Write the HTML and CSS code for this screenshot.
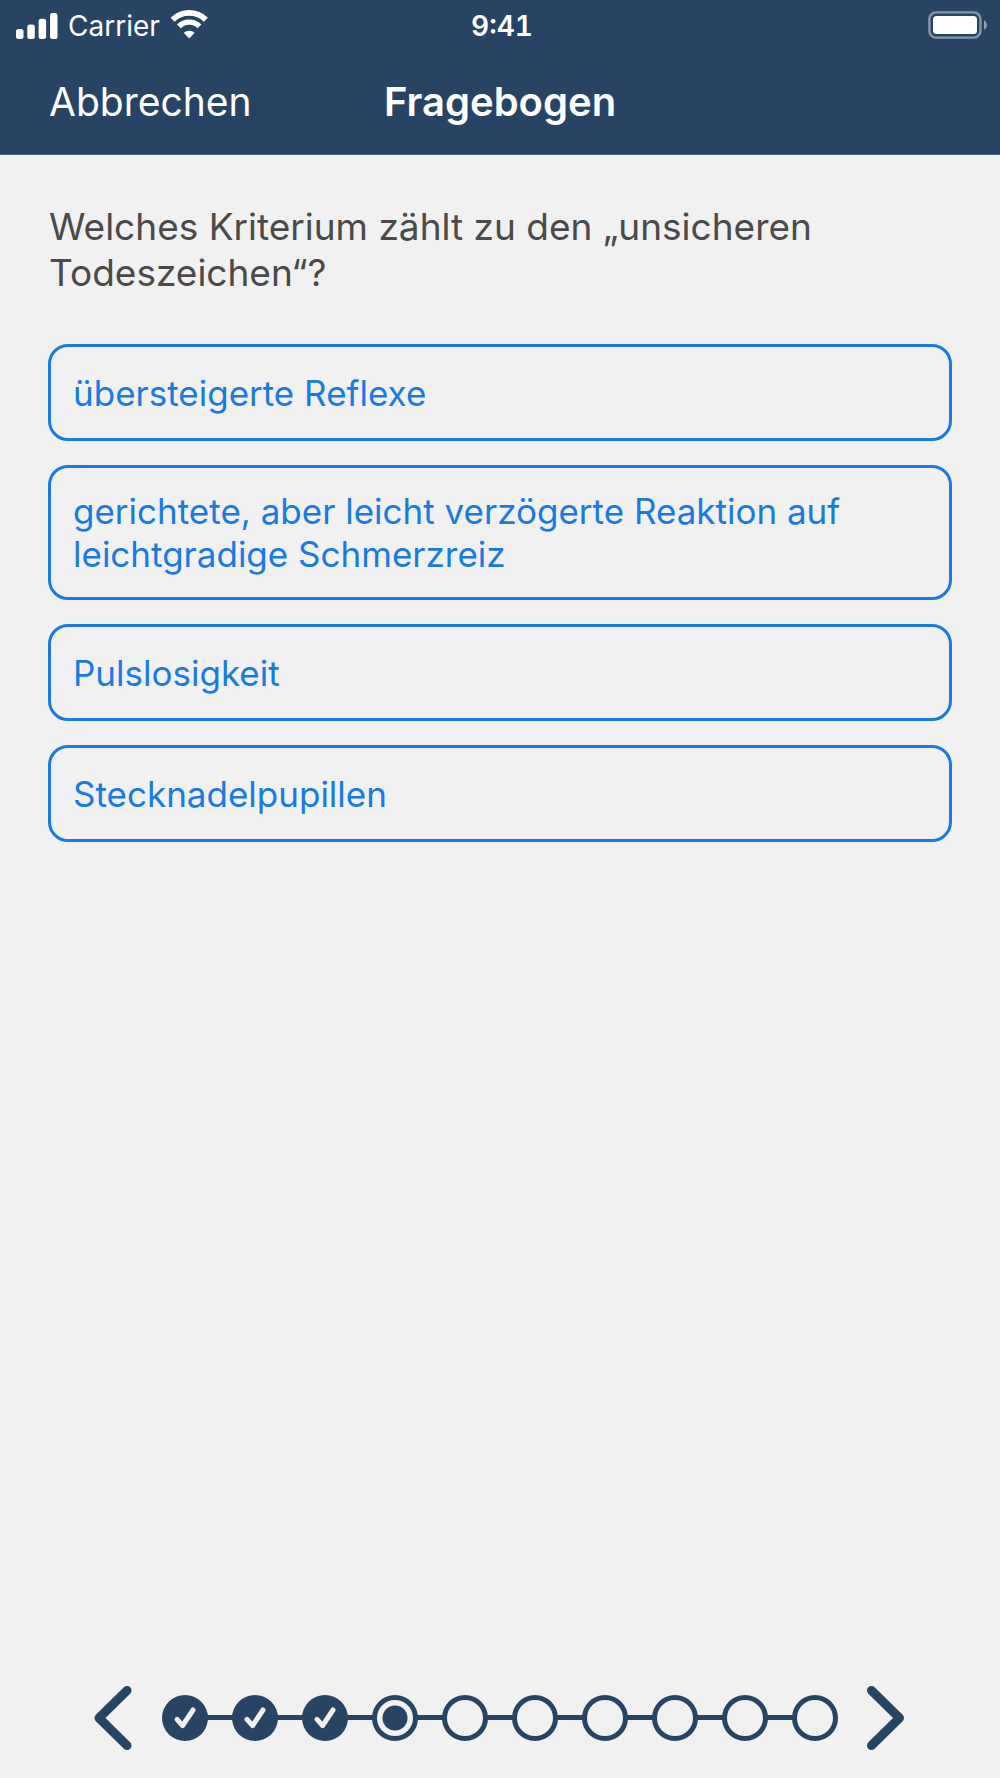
FILE: index.html
```html
<!DOCTYPE html>
<html lang="de">
<head>
<meta charset="utf-8">
<meta name="viewport" content="width=device-width, initial-scale=1">
<title>Fragebogen</title>
<link rel="stylesheet" href="styles.css">
</head>
<body>
<header class="header">
  <div class="status">
    <div class="status-left">
      <svg width="42" height="27" viewBox="0 0 42 27" fill="#fff" aria-hidden="true">
        <rect x="0" y="17" width="7.5" height="10" rx="2.5"/>
        <rect x="11.3" y="12.5" width="7.5" height="14.5" rx="2.5"/>
        <rect x="22.6" y="6.7" width="7.5" height="20.3" rx="2.5"/>
        <rect x="34" y="1" width="7.5" height="26" rx="2.5"/>
      </svg>
      <span class="carrier">Carrier</span>
      <svg width="37" height="27" viewBox="0 0 37 27" fill="none" stroke="#fff" aria-hidden="true">
        <path d="M2.6 7.8A23.6 23.6 0 0 1 35.8 7.8" stroke-width="5.8"/>
        <path d="M8.9 14.4A14.6 14.6 0 0 1 29.5 14.4" stroke-width="5.4"/>
        <path d="M19.2 26.4L13.7 20.8A8.6 8.6 0 0 1 24.7 20.8Z" fill="#fff" stroke="none"/>
      </svg>
    </div>
    <span class="time">9:41</span>
    <svg class="battery" width="60" height="28" viewBox="0 0 60 28" aria-hidden="true">
      <rect x="1.4" y="1.4" width="51" height="25.2" rx="6.5" fill="none" stroke="#8796a9" stroke-width="2.4"/>
      <rect x="5" y="5" width="44" height="18" rx="3.5" fill="#fff"/>
      <path d="M56 9Q59 11 59 14T56 19Z" fill="#93a1b1"/>
    </svg>
  </div>
  <nav class="nav">
    <button class="cancel" type="button">Abbrechen</button>
    <h1 class="title">Fragebogen</h1>
  </nav>
</header>
<main class="main">
  <h2 class="question">Welches Kriterium zählt zu den „unsicheren Todeszeichen“?</h2>
  <div class="options">
    <button class="option" type="button">übersteigerte Reflexe</button>
    <button class="option" type="button">gerichtete, aber leicht verzögerte Reaktion auf leichtgradige Schmerzreiz</button>
    <button class="option" type="button">Pulslosigkeit</button>
    <button class="option" type="button">Stecknadelpupillen</button>
  </div>
</main>
<footer class="footer">
  <button class="arrow" type="button" aria-label="Zurück">
    <svg width="38" height="64" viewBox="0 0 38 64"><path d="M33 4.5L5 32L33 59.5"/></svg>
  </button>
  <ol class="steps">
    <li class="step done"><svg width="46" height="46" viewBox="0 0 46 46"><path d="M15 24.3L20.6 30.6L31 15"/></svg></li>
    <li class="step done"><svg width="46" height="46" viewBox="0 0 46 46"><path d="M15 24.3L20.6 30.6L31 15"/></svg></li>
    <li class="step done"><svg width="46" height="46" viewBox="0 0 46 46"><path d="M15 24.3L20.6 30.6L31 15"/></svg></li>
    <li class="step current" aria-current="step"></li>
    <li class="step"></li>
    <li class="step"></li>
    <li class="step"></li>
    <li class="step"></li>
    <li class="step"></li>
    <li class="step"></li>
  </ol>
  <button class="arrow" type="button" aria-label="Weiter">
    <svg width="38" height="64" viewBox="0 0 38 64"><path d="M3.5 4.5L31.5 32L3.5 59.5"/></svg>
  </button>
</footer>
</body>
</html>
```
FILE: styles.css
```css
:root {
  --navy: #274464;
  --blue: #1a7ae2;
  --page: #f1f1f1;
}

* {
  box-sizing: border-box;
}

body {
  margin: 0;
  min-height: 100vh;
  display: flex;
  flex-direction: column;
  background: var(--page);
  color: #4a4a4a;
  font-family: Inter, "Liberation Sans", sans-serif;
}

button {
  font: inherit;
  background: none;
  border: 0;
  padding: 0;
  cursor: pointer;
}

svg {
  display: block;
  overflow: visible;
}

.header {
  background: var(--navy);
  border-bottom: 1px solid #4a6583;
  color: #fff;
}

.status,
.nav {
  display: grid;
  grid-template-columns: 1fr auto 1fr;
  align-items: center;
}

.status {
  height: 50px;
  padding: 0 12px 0 16px;
  font-size: 28px;
  line-height: 36px;
}

.status-left {
  display: flex;
  align-items: center;
  gap: 10px;
}

.carrier,
.time {
  padding-top: 1px;
}

.time {
  font-weight: 600;
  font-variant-numeric: tabular-nums;
}

.battery {
  justify-self: end;
}

.nav {
  height: 104px;
  padding: 0 49px 1px;
}

.cancel {
  justify-self: start;
  color: #fff;
  font-size: 39px;
}

.title {
  margin: 0;
  font-size: 40px;
  font-weight: 600;
}

.main {
  flex: 1;
  padding: 49px 48px;
}

.question {
  margin: 0 0 48px;
  padding: 0 1px;
  font-size: 37px;
  font-weight: 400;
  line-height: 46px;
}

.options {
  display: flex;
  flex-direction: column;
  gap: 24px;
}

.option {
  min-height: 97px;
  padding: 22px 22px 21px;
  border: 3px solid var(--blue);
  border-radius: 20px;
  color: var(--blue);
  font-size: 35px;
  line-height: 43px;
  text-align: left;
}

.footer {
  display: flex;
  align-items: center;
  justify-content: center;
  gap: 30px;
  padding: 0 24px 28px;
}

.arrow path {
  fill: none;
  stroke: var(--navy);
  stroke-width: 9;
  stroke-linecap: round;
  stroke-linejoin: round;
}

.steps {
  display: flex;
  margin: 0;
  padding: 0;
  gap: 24px;
  list-style: none;
  background: linear-gradient(var(--navy), var(--navy)) 50% 20px / calc(100% - 46px) 5px no-repeat;
}

.step {
  width: 46px;
  height: 46px;
  border: 5px solid var(--navy);
  border-radius: 50%;
  background: var(--page);
}

.done {
  border: 0;
  background: var(--navy);
}

.done path {
  fill: none;
  stroke: var(--page);
  stroke-width: 5;
  stroke-linecap: round;
  stroke-linejoin: round;
}

.current {
  background: radial-gradient(circle, var(--navy) 12px, var(--page) 13px);
}
```
